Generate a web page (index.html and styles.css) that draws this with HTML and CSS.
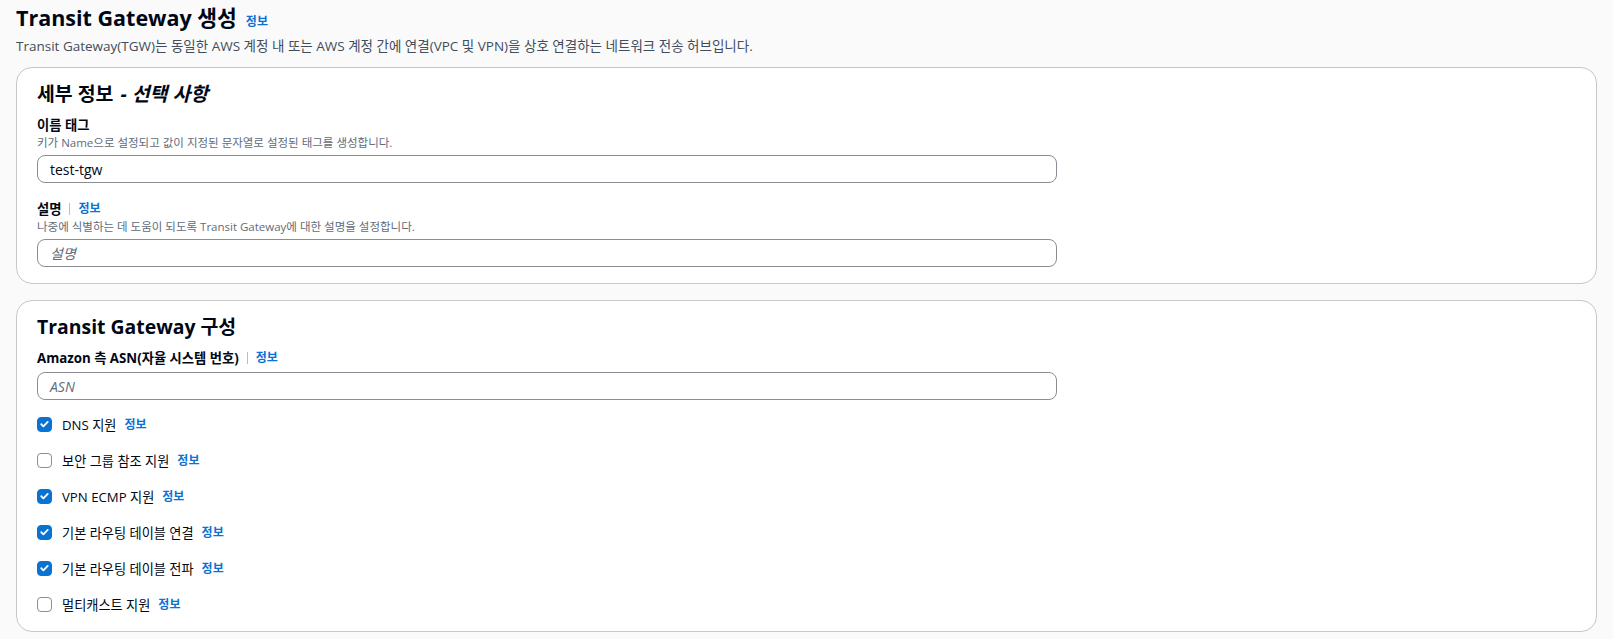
FILE: index.html
```html
<!DOCTYPE html>
<html lang="ko">
<head>
<meta charset="utf-8">
<title>Transit Gateway 생성</title>
<link rel="stylesheet" href="styles.css">
</head>
<body>
<div class="page">
  <header class="page-header">
    <h1 class="page-title">Transit Gateway 생성 <a class="info-link" href="#">정보</a></h1>
    <p class="page-desc">Transit Gateway(TGW)는 동일한 AWS 계정 내 또는 AWS 계정 간에 연결(VPC 및 VPN)을 상호 연결하는 네트워크 전송 허브입니다.</p>
  </header>

  <section class="panel">
    <h2 class="panel-title">세부 정보 <i class="optional">- 선택 사항</i></h2>
    <div class="field">
      <div class="label">이름 태그</div>
      <div class="field-desc">키가 Name으로 설정되고 값이 지정된 문자열로 설정된 태그를 생성합니다.</div>
      <div class="input"><span class="value">test-tgw</span></div>
    </div>
    <div class="field">
      <div class="label">설명<span class="divider"></span><a class="info-link" href="#">정보</a></div>
      <div class="field-desc">나중에 식별하는 데 도움이 되도록 Transit Gateway에 대한 설명을 설정합니다.</div>
      <div class="input"><span class="placeholder">설명</span></div>
    </div>
  </section>

  <section class="panel">
    <h2 class="panel-title">Transit Gateway 구성</h2>
    <div class="field">
      <div class="label">Amazon 측 ASN(자율 시스템 번호)<span class="divider"></span><a class="info-link" href="#">정보</a></div>
      <div class="input input-nodesc"><span class="placeholder">ASN</span></div>
    </div>
    <div class="checks">
      <div class="check-row"><span class="box checked"><svg viewBox="0 0 16 16"><path d="M4 8.3l2.6 2.6L12 5.4"/></svg></span><span class="check-label">DNS 지원</span><a class="info-link" href="#">정보</a></div>
      <div class="check-row"><span class="box"></span><span class="check-label">보안 그룹 참조 지원</span><a class="info-link" href="#">정보</a></div>
      <div class="check-row"><span class="box checked"><svg viewBox="0 0 16 16"><path d="M4 8.3l2.6 2.6L12 5.4"/></svg></span><span class="check-label">VPN ECMP 지원</span><a class="info-link" href="#">정보</a></div>
      <div class="check-row"><span class="box checked"><svg viewBox="0 0 16 16"><path d="M4 8.3l2.6 2.6L12 5.4"/></svg></span><span class="check-label">기본 라우팅 테이블 연결</span><a class="info-link" href="#">정보</a></div>
      <div class="check-row"><span class="box checked"><svg viewBox="0 0 16 16"><path d="M4 8.3l2.6 2.6L12 5.4"/></svg></span><span class="check-label">기본 라우팅 테이블 전파</span><a class="info-link" href="#">정보</a></div>
      <div class="check-row"><span class="box"></span><span class="check-label">멀티캐스트 지원</span><a class="info-link" href="#">정보</a></div>
    </div>
  </section>
</div>
</body>
</html>
```

FILE: styles.css
```css
* { box-sizing: border-box; }
html, body { margin: 0; padding: 0; }
body {
  background: #fafafa;
  font-family: "Open Sans", "Noto Sans CJK KR", sans-serif;
  color: #000716;
}
.page {
  padding: 0 16px 16px 16px;
}
.page-header {
  padding-top: 4px;
}
.page-title {
  margin: 0;
  font-size: 21.5px;
  line-height: 28px;
  font-weight: 700;
  color: #000716;
  display: flex;
  align-items: baseline;
  gap: 9px;
}
.page-title .info-link { font-size: 12px; }
.page-desc {
  margin: 1px 0 0 0;
  font-size: 13.5px;
  line-height: 18px;
  color: #414d5c;
}
.info-link {
  color: #0972d3;
  font-weight: 700;
  font-size: 12px;
  text-decoration: none;
}
.panel {
  margin-top: 12px;
  background: #fff;
  border: 1px solid #c6c6cd;
  border-radius: 16px;
  padding: 14px 20px 16px 20px;
}
.panel + .panel { margin-top: 16px; padding-bottom: 17px; }
.panel-title {
  margin: 0;
  font-size: 19.4px;
  line-height: 24px;
  font-weight: 700;
}
.optional { font-style: italic; font-weight: 700; margin-left: 2px; }
.field { margin-top: 9px; }
.field + .field { margin-top: 16px; }
.label {
  font-size: 13.3px;
  line-height: 20px;
  font-weight: 700;
  display: flex;
  align-items: center;
}
.label .info-link { font-size: 12px; }
.divider {
  display: inline-block;
  width: 1px;
  height: 12px;
  background: #b6bec9;
  margin: 0 8px;
}
.field-desc {
  font-size: 11.5px;
  line-height: 16px;
  color: #5f6b7a;
}
.input {
  margin-top: 4px;
  width: 1020px;
  height: 28px;
  border: 1px solid #8c8c94;
  border-radius: 8px;
  background: #fff;
  padding: 0 12px;
  display: flex;
  align-items: center;
  font-size: 14px;
}
.input-nodesc { margin-top: 4px; }
.value { color: #000716; }
.placeholder { color: #5f6b7a; font-style: italic; }
.checks {
  margin-top: 14px;
  display: flex;
  flex-direction: column;
  gap: 16px;
}
.check-row {
  display: flex;
  align-items: center;
  height: 20px;
  font-size: 13.2px;
}
.box {
  width: 15px;
  height: 15px;
  border: 1.5px solid #8c8c94;
  border-radius: 4px;
  background: #fff;
  margin-right: 10px;
  display: flex;
  align-items: center;
  justify-content: center;
}
.box.checked {
  background: #0972d3;
  border-color: #0972d3;
}
.box svg {
  width: 14px;
  height: 14px;
  fill: none;
  stroke: #fff;
  stroke-width: 2.2;
  stroke-linecap: round;
  stroke-linejoin: round;
}
.check-label { margin-right: 8px; }
```
